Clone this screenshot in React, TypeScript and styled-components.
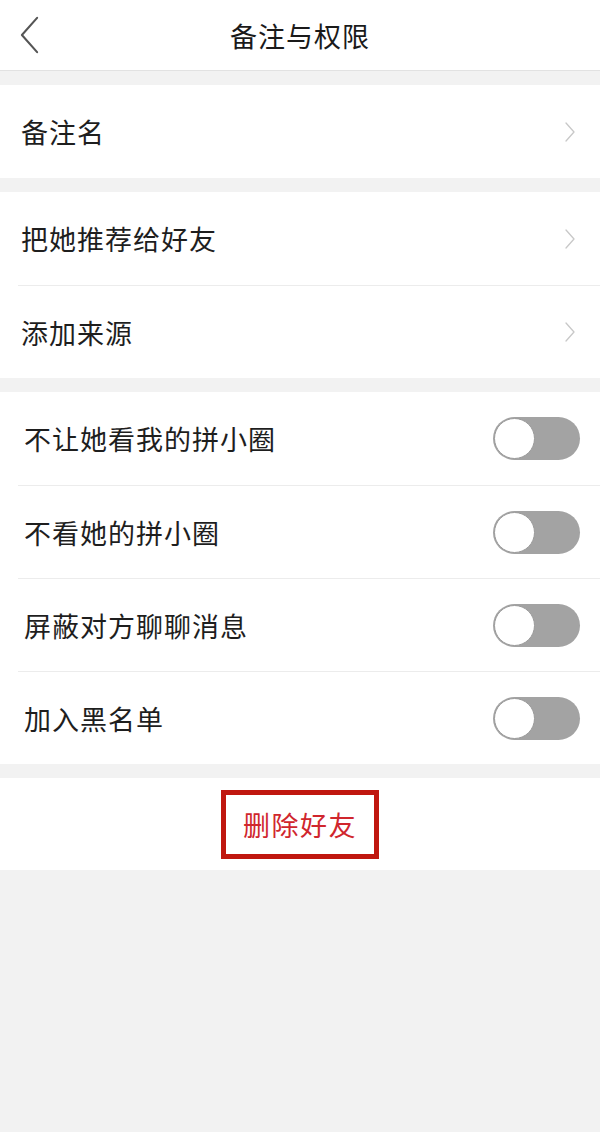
import { createGlobalStyle, styled } from 'styled-components';

const GlobalStyle = createGlobalStyle`
  html, body {
    margin: 0;
    padding: 0;
    background: #f2f2f2;
    font-family: "Noto Sans CJK SC", "Noto Sans", sans-serif;
  }
`;

const linkItems = [['备注名'], ['把她推荐给好友', '添加来源']];
const toggleItems = ['不让她看我的拼小圈', '不看她的拼小圈', '屏蔽对方聊聊消息', '加入黑名单'];

const Chevron = ({ size, color, width, dir }: { size: number; color: string; width: number; dir: 'left' | 'right' }) => (
  <svg width={size / 2} height={size} viewBox="0 0 10 20" fill="none">
    <path
      d={dir === 'left' ? 'M9 1 L1 10 L9 19' : 'M1 1 L9 10 L1 19'}
      stroke={color}
      strokeWidth={width}
      strokeLinecap="round"
      strokeLinejoin="round"
    />
  </svg>
);

const App = () => {
  return (
    <Page>
      <GlobalStyle />
      <Header>
        <Back>
          <Chevron size={38} color="#555" width={1.1} dir="left" />
        </Back>
        <Title>备注与权限</Title>
      </Header>

      {linkItems.map((group, gi) => (
        <Section key={gi}>
          {group.map((label, i) => (
            <Row key={label} $divided={i > 0}>
              <Label>{label}</Label>
              <Arrow>
                <Chevron size={20} color="#c8c8c8" width={1.3} dir="right" />
              </Arrow>
            </Row>
          ))}
        </Section>
      ))}

      <Section>
        {toggleItems.map((label, i) => (
          <Row key={label} $divided={i > 0}>
            <Label $indent>{label}</Label>
            <Switch>
              <Knob />
            </Switch>
          </Row>
        ))}
      </Section>

      <Section>
        <DeleteRow>
          <DeleteBox>删除好友</DeleteBox>
        </DeleteRow>
      </Section>
    </Page>
  );
};

export default App;

const Page = styled.div`
  width: 600px;
  min-height: 1132px;
  background: #f2f2f2;
`;

const Header = styled.header`
  position: relative;
  height: 70px;
  background: #fff;
  border-bottom: 1px solid #e2e2e2;
  display: flex;
  align-items: center;
  justify-content: center;
`;

const Back = styled.div`
  position: absolute;
  left: 20px;
  top: 16px;
  display: flex;
`;

const Title = styled.h1`
  margin: 0;
  font-size: 27px;
  font-weight: 400;
  color: #1a1a1a;
  letter-spacing: 1px;
`;

const Section = styled.section`
  margin-top: 14px;
  background: #fff;
`;

const Row = styled.div<{ $divided?: boolean }>`
  height: ${(p) => (p.$divided ? 92 : 93)}px;
  margin-left: 18px;
  padding-right: 20px;
  display: flex;
  align-items: center;
  justify-content: space-between;
  border-top: ${(p) => (p.$divided ? '1px solid #ececec' : 'none')};
`;

const Label = styled.span<{ $indent?: boolean }>`
  padding-left: ${(p) => (p.$indent ? 6 : 3)}px;
  font-size: 27px;
  color: #1e1e1e;
  letter-spacing: 1px;
`;

const Arrow = styled.span`
  display: flex;
  padding-right: 5px;
`;

const Switch = styled.div`
  width: 87px;
  height: 43px;
  border-radius: 22px;
  background: #a3a3a3;
  box-sizing: border-box;
  padding: 1px;
  display: flex;
  align-items: center;
`;

const Knob = styled.div`
  width: 41px;
  height: 41px;
  border-radius: 50%;
  background: #fff;
  box-sizing: border-box;
  border: 1px solid #9a9a9a;
`;

const DeleteRow = styled.div`
  height: 92px;
  display: flex;
  align-items: center;
  justify-content: center;
`;

const DeleteBox = styled.div`
  width: 158px;
  height: 69px;
  box-sizing: border-box;
  border: 5px solid #c0170f;
  display: flex;
  align-items: center;
  justify-content: center;
  font-size: 27px;
  color: #d0262d;
  letter-spacing: 1.5px;
`;
